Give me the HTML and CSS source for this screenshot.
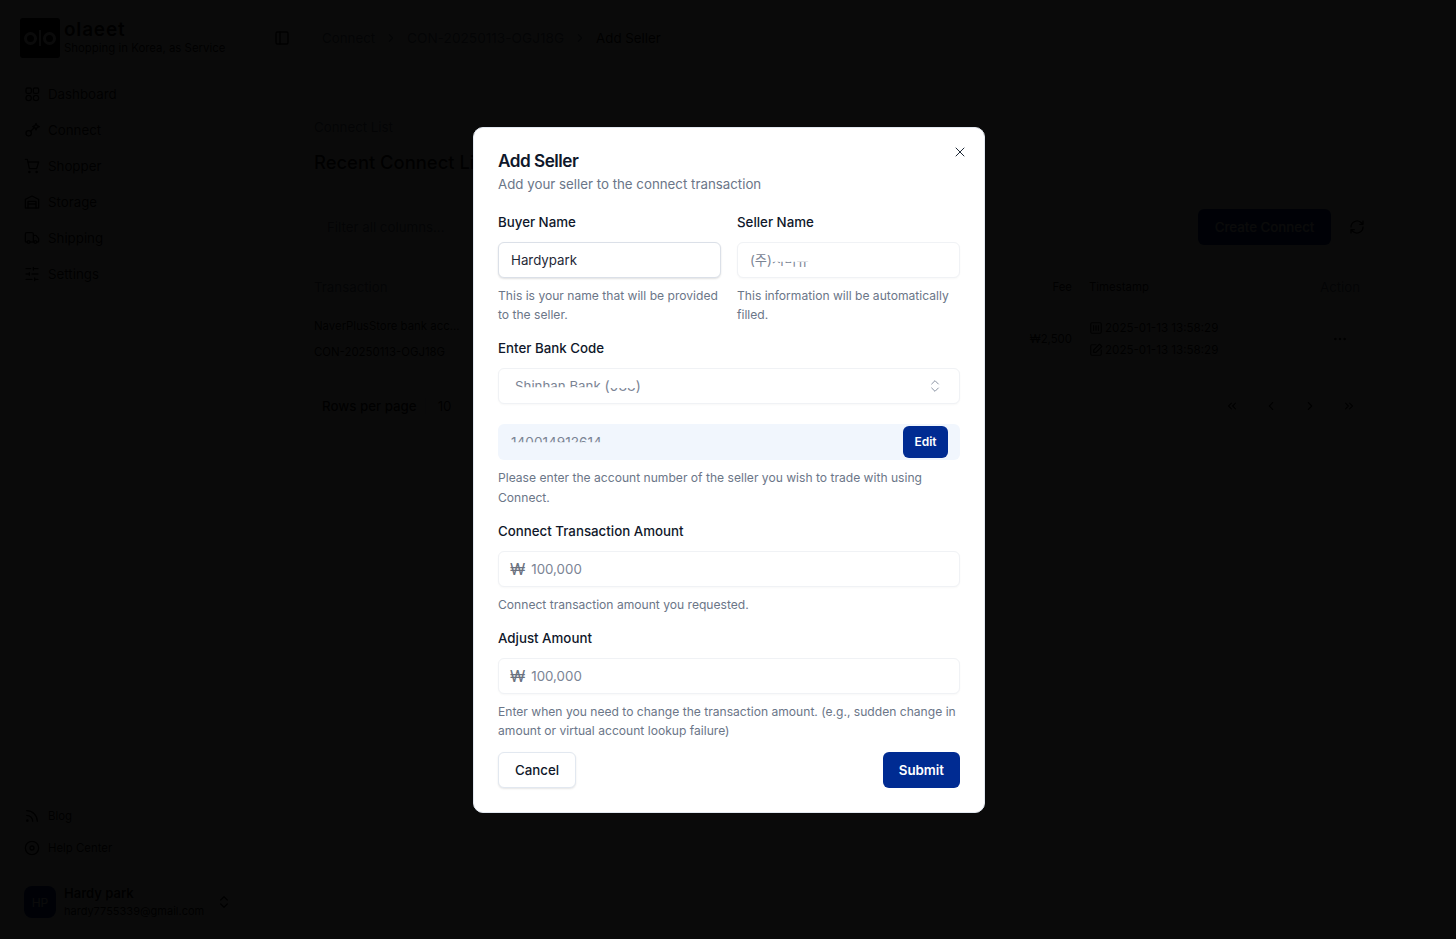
FILE: index.html
```html
<!DOCTYPE html>
<html lang="en">
<head>
<meta charset="utf-8">
<title>Add Seller</title>
<link rel="stylesheet" href="styles.css">
</head>
<body>
<svg class="sprite" width="0" height="0" aria-hidden="true">
  <symbol id="i-dash" viewBox="0 0 24 24"><rect x="3" y="3" width="8" height="8" rx="2"/><rect x="14" y="3" width="8" height="8" rx="2"/><rect x="14" y="14" width="8" height="8" rx="4"/><rect x="3" y="14" width="8" height="8" rx="4"/></symbol>
  <symbol id="i-connect" viewBox="0 0 24 24"><circle cx="7" cy="17" r="4"/><path d="m10 14 5-5M18 2l1.500 3.500L23 7l-3.500 1.500L18 12l-1.500-3.500L13 7l3.500-1.500z"/></symbol>
  <symbol id="i-cart" viewBox="0 0 24 24"><circle cx="8" cy="21" r="1"/><circle cx="19" cy="21" r="1"/><path d="M2 2h3l3 14h11l3-10H6"/></symbol>
  <symbol id="i-store" viewBox="0 0 24 24"><path d="M2 21V8l10-5 10 5v13z"/><path d="M6 21V11h12v10M6 15h12"/></symbol>
  <symbol id="i-truck" viewBox="0 0 24 24"><path d="M14 18V6a2 2 0 0 0-2-2H4a2 2 0 0 0-2 2v11a1 1 0 0 0 1 1h2M15 18H9M19 18h2a1 1 0 0 0 1-1v-4l-4-5h-4"/><circle cx="17" cy="18" r="2"/><circle cx="7" cy="18" r="2"/></symbol>
  <symbol id="i-sliders" viewBox="0 0 24 24"><path d="M21 4h-7M10 4H3M21 12H12M8 12H3M21 20h-5M12 20H3M14 2v4M8 10v4M16 18v4"/></symbol>
  <symbol id="i-rss" viewBox="0 0 24 24"><path d="M4 11a9 9 0 0 1 9 9M4 4a16 16 0 0 1 16 16"/><circle cx="5" cy="19" r="1"/></symbol>
  <symbol id="i-help" viewBox="0 0 24 24"><circle cx="12" cy="12" r="10"/><circle cx="12" cy="12" r="3"/></symbol>
  <symbol id="i-updown" viewBox="0 0 24 24"><path d="m7 15 5 5 5-5M7 9l5-5 5 5"/></symbol>
  <symbol id="i-panel" viewBox="0 0 24 24"><rect x="3" y="3" width="18" height="18" rx="2"/><path d="M9 3v18"/></symbol>
  <symbol id="i-right" viewBox="0 0 24 24"><path d="m9 18 6-6-6-6"/></symbol>
  <symbol id="i-left" viewBox="0 0 24 24"><path d="m15 18-6-6 6-6"/></symbol>
  <symbol id="i-first" viewBox="0 0 24 24"><path d="m11 17-5-5 5-5M18 17l-5-5 5-5"/></symbol>
  <symbol id="i-last" viewBox="0 0 24 24"><path d="m6 17 5-5-5-5M13 17l5-5-5-5"/></symbol>
  <symbol id="i-refresh" viewBox="0 0 24 24"><path d="M3 12a9 9 0 0 1 15-6.700L21 8M21 3v5h-5M21 12a9 9 0 0 1-15 6.700L3 16M3 21v-5h5"/></symbol>
  <symbol id="i-cal" viewBox="0 0 24 24"><rect x="3" y="3" width="18" height="18" rx="2"/><path d="M12 8v8M8 8v8M16 8v8"/></symbol>
  <symbol id="i-edit" viewBox="0 0 24 24"><path d="M12 3H5a2 2 0 0 0-2 2v14a2 2 0 0 0 2 2h14a2 2 0 0 0 2-2v-7"/><path d="m18 2 4 4-10 10H8v-4z"/></symbol>
  <symbol id="i-dots" viewBox="0 0 24 24"><circle cx="5" cy="12" r="1"/><circle cx="12" cy="12" r="1"/><circle cx="19" cy="12" r="1"/></symbol>
  <symbol id="i-x" viewBox="0 0 24 24"><path d="M18 6 6 18M6 6l12 12"/></symbol>
</svg>

<div class="app">
  <aside class="sidebar">
    <div class="brand">
      <div class="brand-mark"><span class="mark-o"></span><span class="mark-bar"></span><span class="mark-o"></span></div>
      <div class="brand-text">
        <div class="brand-name">olaeet</div>
        <div class="brand-tag">Shopping in Korea, as Service</div>
      </div>
    </div>
    <nav class="nav">
      <a class="nav-item"><svg class="icon"><use href="#i-dash"/></svg>Dashboard</a>
      <a class="nav-item"><svg class="icon"><use href="#i-connect"/></svg>Connect</a>
      <a class="nav-item"><svg class="icon"><use href="#i-cart"/></svg>Shopper</a>
      <a class="nav-item"><svg class="icon"><use href="#i-store"/></svg>Storage</a>
      <a class="nav-item"><svg class="icon"><use href="#i-truck"/></svg>Shipping</a>
      <a class="nav-item"><svg class="icon"><use href="#i-sliders"/></svg>Settings</a>
    </nav>
    <div class="nav-foot">
      <a class="foot-item"><svg class="icon"><use href="#i-rss"/></svg>Blog</a>
      <a class="foot-item"><svg class="icon"><use href="#i-help"/></svg>Help Center</a>
    </div>
    <div class="user">
      <div class="avatar">HP</div>
      <div class="user-text">
        <div class="user-name">Hardy park</div>
        <div class="user-mail">hardy7755339@gmail.com</div>
      </div>
      <svg class="icon icon-updown"><use href="#i-updown"/></svg>
    </div>
  </aside>

  <main class="main">
    <header class="topbar">
      <svg class="icon"><use href="#i-panel"/></svg>
      <span class="crumbs">
        <span class="crumb">Connect</span>
        <svg class="icon-sm"><use href="#i-right"/></svg>
        <span class="crumb crumb-id">CON-20250113-OGJ18G</span>
        <svg class="icon-sm"><use href="#i-right"/></svg>
        <span class="crumb crumb-now">Add Seller</span>
      </span>
    </header>
    <section class="content">
      <div class="eyebrow">Connect List</div>
      <h1 class="page-title">Recent Connect List</h1>
      <div class="toolbar">
        <div class="filter">Filter all columns...</div>
        <button class="create">Create Connect</button>
        <svg class="icon refresh"><use href="#i-refresh"/></svg>
      </div>
      <div class="table-row table-head">
        <div>Transaction</div>
        <div class="cell-fee head-small">Fee</div>
        <div class="head-small">Timestamp</div>
        <div>Action</div>
      </div>
      <div class="table-row table-body">
        <div class="cell-tx">
          <div>NaverPlusStore bank acc...</div>
          <div>CON-20250113-OGJ18G</div>
        </div>
        <div class="cell-fee cell-raised">₩2,500</div>
        <div class="cell-time">
          <div class="time-line"><svg class="icon-sm"><use href="#i-cal"/></svg>2025-01-13 13:58:29</div>
          <div class="time-line"><svg class="icon-sm"><use href="#i-edit"/></svg>2025-01-13 13:58:29</div>
        </div>
        <div class="cell-action cell-raised"><svg class="icon"><use href="#i-dots"/></svg></div>
      </div>
      <div class="pager">
        <span class="pager-label">Rows per page</span>
        <span class="pager-sep"></span>
        <span class="pager-size">10</span>
        <span class="pager-nav">
          <svg class="icon-sm"><use href="#i-first"/></svg>
          <svg class="icon-sm"><use href="#i-left"/></svg>
          <svg class="icon-sm"><use href="#i-right"/></svg>
          <svg class="icon-sm"><use href="#i-last"/></svg>
        </span>
      </div>
    </section>
  </main>
</div>

<div class="overlay">
  <div class="dialog" role="dialog" aria-labelledby="dlg-title">
    <button class="close" aria-label="Close"><svg class="icon"><use href="#i-x"/></svg></button>
    <h2 class="dlg-title" id="dlg-title">Add Seller</h2>
    <p class="dlg-desc">Add your seller to the connect transaction</p>

    <div class="two-col">
      <div class="field">
        <div class="label">Buyer Name</div>
        <div class="input input-strong">Hardypark</div>
        <p class="help">This is your name that will be provided to the seller.</p>
      </div>
      <div class="field">
        <div class="label">Seller Name</div>
        <div class="input input-ghost"><span class="ph">(주)</span><span class="ph clip-top">시미뮤</span></div>
        <p class="help">This information will be automatically filled.</p>
      </div>
    </div>

    <div class="field field-gap-b">
      <div class="label">Enter Bank Code</div>
      <div class="input input-ghost select">
        <span class="select-value"><span class="ph clip-bottom">Shinhan Bank</span> <span class="ph code">(<span class="clip-top">088</span>)</span></span>
        <svg class="icon select-icon"><use href="#i-updown"/></svg>
      </div>
    </div>

    <div class="account">
      <span class="ph clip-bottom-more">140014912614</span>
      <button class="edit">Edit</button>
    </div>
    <p class="help help-wide">Please enter the account number of the seller you wish to trade with using Connect.</p>

    <div class="field field-gap">
      <div class="label">Connect Transaction Amount</div>
      <div class="input input-ghost"><span class="won">₩</span><span class="ph">100,000</span></div>
      <p class="help">Connect transaction amount you requested.</p>
    </div>

    <div class="field field-gap-b">
      <div class="label">Adjust Amount</div>
      <div class="input input-ghost"><span class="won">₩</span><span class="ph">100,000</span></div>
      <p class="help">Enter when you need to change the transaction amount. (e.g., sudden change in amount or virtual account lookup failure)</p>
    </div>

    <div class="actions">
      <button class="btn btn-outline">Cancel</button>
      <button class="btn btn-primary">Submit</button>
    </div>
  </div>
</div>
</body>
</html>
```

FILE: styles.css
```css
* { box-sizing: border-box; }
html, body { margin: 0; height: 100%; }
body {
  font-family: Inter, "Noto Sans CJK KR", sans-serif;
  font-size: 13.300px;
  color: #0a0a0a;
  background: #fff;
  overflow: hidden;
}
button { font: inherit; border: 0; padding: 0; background: none; color: inherit; }
p, h1, h2 { margin: 0; }
.sprite { position: absolute; }
.icon, .icon-sm { fill: none; stroke: currentColor; stroke-width: 2; stroke-linecap: round; stroke-linejoin: round; flex: none; }
.icon { width: 16px; height: 16px; }
.icon-sm { width: 14px; height: 14px; }

.app { display: flex; height: 939px; }
.sidebar { width: 256px; flex: none; display: flex; flex-direction: column; padding: 18px 24px 19px 24px; }
.brand { display: flex; gap: 4px; height: 40px; margin-left: -4px; }
.brand-mark { width: 40px; height: 40px; flex: none; border-radius: 3px; background: #000; display: flex; align-items: center; justify-content: center; gap: 2px; }
.mark-o { width: 13px; height: 13px; border: 3px solid #fff; border-radius: 50%; }
.mark-bar { width: 2px; height: 16px; background: #fff; }
.brand-text { white-space: nowrap; }
.brand-name { font-size: 19px; font-weight: 600; line-height: 20px; letter-spacing: .8px; margin-top: 2px; }
.brand-tag { font-size: 11.400px; line-height: 16px; }
.nav { display: flex; flex-direction: column; gap: 4px; margin-top: 20px; }
.nav-item { display: flex; align-items: center; gap: 8px; height: 32px; }
.nav-foot { margin-top: auto; display: flex; flex-direction: column; }
.foot-item { display: flex; align-items: center; gap: 8px; height: 32px; font-size: 11.400px; }
.user { display: flex; align-items: center; gap: 8px; margin-top: 20px; height: 36px; }
.avatar { width: 32px; height: 32px; flex: none; border-radius: 8px; background: #002b92; color: #fff; font-size: 12px; display: flex; align-items: center; justify-content: center; }
.user-text { flex: 1; min-width: 0; white-space: nowrap; }
.user-name { font-size: 13px; font-weight: 600; line-height: 18px; }
.user-mail { font-size: 11px; line-height: 18px; }
.icon-updown { margin-left: 4px; }

.main { flex: 1; min-width: 0; }
.topbar { display: flex; align-items: center; height: 76px; padding-left: 18px; }
.crumbs { display: flex; align-items: center; gap: 9px; margin-left: 32px; color: #64748b; }
.crumb-id { font-size: 13.650px; }
.crumb-now { color: #0a0a0a; }
.content { padding: 0 88px 0 58px; }
.eyebrow { margin-top: 41px; line-height: 20px; color: #64748b; }
.page-title { font-size: 18.400px; font-weight: 500; line-height: 28px; margin-top: 11px; }
.toolbar { display: flex; align-items: center; margin-top: 33px; height: 36px; }
.filter { flex: 1; padding-left: 13px; color: #64748b; }
.create { width: 133px; height: 36px; border-radius: 6px; background: #002b92; color: #fff; font-weight: 500; }
.refresh { margin-left: 18px; margin-right: 3px; }
.table-row { display: grid; grid-template-columns: minmax(0, 1fr) 60px 231px 48px; }
.table-head { margin-top: 32px; line-height: 20px; color: #64748b; }
.head-small { font-size: 11.400px; color: #0a0a0a; }
.cell-fee { text-align: right; margin-right: 17px; }
.table-body { margin-top: 16px; font-size: 11.400px; align-items: center; }
.cell-raised { padding-bottom: 1px; }
.cell-tx { line-height: 26px; }
.cell-time { line-height: 22px; font-size: 11.600px; }
.time-line { display: flex; align-items: center; gap: 2px; }
.cell-action { padding-left: 12px; display: flex; }
.pager { display: flex; align-items: center; margin-top: 25px; padding-left: 8px; height: 32px; }
.pager-label { font-weight: 500; }
.pager-sep { width: 1px; height: 16px; margin: 0 12px 0 8px; background: #e2e8f0; }
.pager-size { flex: 1; }
.pager-nav { display: flex; gap: 25px; margin-right: 12px; }

.overlay { position: fixed; inset: 0; background: rgba(0, 0, 0, .96); display: flex; align-items: center; justify-content: center; padding-left: 2px; }
.dialog { position: relative; width: 512px; height: 686px; background: #fff; border: 1px solid #e2e8f0; border-radius: 10px; padding: 24px; }
.close { position: absolute; top: 16px; right: 16px; width: 16px; height: 16px; display: flex; color: #1f2937; }
.close .icon { stroke-width: 1.500; }
.dlg-title { font-size: 17.200px; font-weight: 600; line-height: 18px; letter-spacing: -.5px; color: #0f172a; }
.dlg-desc { line-height: 20px; margin-top: 4px; color: #6b7688; }
.two-col { display: grid; grid-template-columns: 1fr 1fr; gap: 16px; margin-top: 21px; }
.label { font-weight: 500; line-height: 14px; color: #0f172a; }
.input { display: flex; align-items: center; height: 36px; margin-top: 13px; padding: 0 12px; border: 1px solid #e2e8f0; border-radius: 6px; background: #fff; box-shadow: 0 1px 2px rgba(0,0,0,.05); }
.input-strong { border-color: #dbe0e8; color: #1f2937; box-shadow: 0 1px 2px rgba(0,0,0,.12); }
.input-ghost { border-color: #f0f2f5; box-shadow: 0 1px 2px rgba(0,0,0,.03); }
.ph { color: #7b8494; white-space: pre; }
.code { font-size: 14px; }
.clip-top { display: inline-block; clip-path: inset(62% 0 0 0); }
.clip-bottom { display: inline-block; clip-path: inset(0 0 44% 0); }
.clip-bottom-more { display: inline-block; font-size: 13.600px; clip-path: inset(0 0 48% 0); }
.help { font-size: 12.100px; line-height: 19.200px; margin-top: 8px; color: #6b7688; }
.help-wide { line-height: 20px; margin-top: 8px; }
.field-gap { margin-top: 16px; }
.field-gap-b { margin-top: 17px; }
.select { justify-content: space-between; padding: 0 16px 0 16px; }
.select-value { white-space: pre; }
.select-icon { color: #8a93a3; stroke-width: 1.500; }
.account { display: flex; align-items: center; justify-content: space-between; height: 36px; margin-top: 20px; padding: 0 12px 0 13px; border-radius: 6px; background: #f1f6fd; }
.edit { width: 45px; height: 32px; border-radius: 6px; background: #002b92; color: #fff; font-size: 12px; font-weight: 600; }
.won { font-size: 16px; color: #6b7280; margin: 0 6px 0 -1px; line-height: 1; }
.actions { display: flex; justify-content: space-between; margin-top: 11px; }
.btn { height: 36px; padding: 0 16px; border-radius: 6px; font-size: 13.300px; font-weight: 500; }
.btn-outline { border: 1px solid #e2e8f0; background: #fff; color: #0f172a; box-shadow: 0 1px 2px rgba(0,0,0,.1); }
.btn-primary { background: #002b92; color: #fff; font-weight: 600; }
```
